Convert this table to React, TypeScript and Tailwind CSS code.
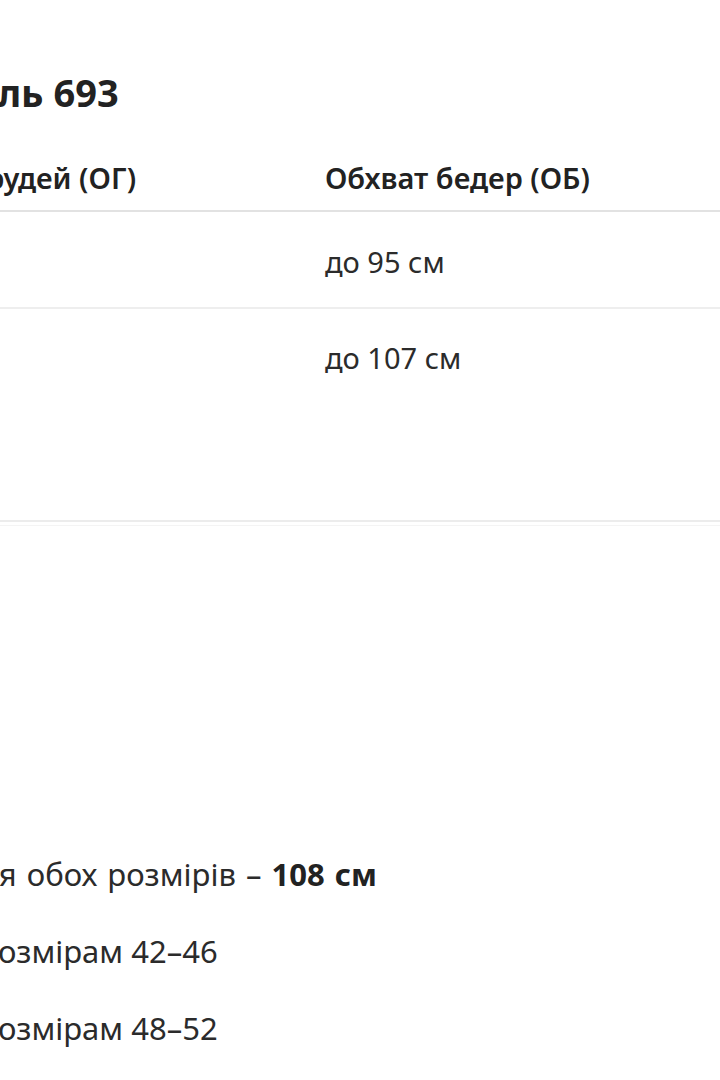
import React from "react";

const rows = [
  { chest: "до 90 см", hips: "до 95 см", pt: "pt-[32px]", pb: "pb-[27px]" },
  { chest: "до 102 см", hips: "до 107 см", pt: "pt-[31px]", pb: "pb-[144px]" },
];

export default function App() {
  return (
    <div
      className="w-[720px] h-[1080px] overflow-hidden bg-white text-[#222]"
      style={{ fontFamily: '"Noto Sans", "Open Sans", sans-serif' }}
    >
      <h1 className="ml-[-108px] pt-[70px] text-[38px] leading-[44px] font-bold whitespace-nowrap">
        Модель 693
      </h1>

      <div className="ml-[-138px] mt-[25px] w-[860px]">
        <div className="grid grid-cols-[463px_1fr] border-b-2 border-[#e2e2e2] pt-[21px] pb-[14px] text-[29px] leading-[36px] font-semibold whitespace-nowrap">
          <div>Обхват грудей (ОГ)</div>
          <div>Обхват бедер (ОБ)</div>
        </div>
        {rows.map((r, i) => (
          <div
            key={i}
            className={`grid grid-cols-[463px_1fr] border-b-2 ${
              i === 0 ? "border-[#eeeeee]" : "border-[#ececec]"
            } ${r.pt} ${r.pb} text-[29px] leading-[36px] text-[#2b2b2b] whitespace-nowrap`}
          >
            <div>{r.chest}</div>
            <div>{r.hips}</div>
          </div>
        ))}
        <div className="mt-[3px] border-t border-[#f4f4f4]" />
      </div>

      <div className="ml-[-190px] mt-[330px] flex flex-col gap-[41px] text-[31px] leading-[36px] text-[#2b2b2b] whitespace-nowrap">
        <p className="ml-[4px] [word-spacing:2px]">
          Довжина для обох розмірів – <b className="font-bold text-[#222]">108 см</b>
        </p>
        <p>Відповідає розмірам 42–46</p>
        <p>Відповідає розмірам 48–52</p>
      </div>
    </div>
  );
}
